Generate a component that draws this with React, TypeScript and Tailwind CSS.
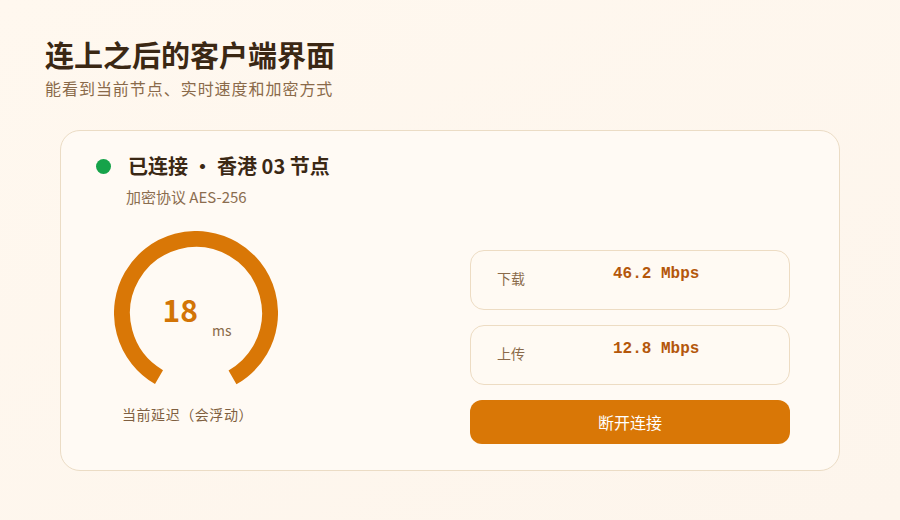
import React from "react";

const font = { fontFamily: '"Noto Sans CJK SC", "Noto Sans", sans-serif' };

// 300° ring with the gap centred at the bottom
function LatencyGauge({ ms }: { ms: number }) {
  const r = 74;
  const c = 2 * Math.PI * r;
  const arc = (c * 300) / 360;
  return (
    <div className="relative w-[164px] h-[164px]">
      <svg width="164" height="164" viewBox="0 0 164 164">
        <circle
          cx="82"
          cy="82"
          r={r}
          fill="none"
          stroke="#d97706"
          strokeWidth="16"
          strokeDasharray={`${arc} ${c}`}
          transform="rotate(120 82 82)"
        />
      </svg>
      <div className="absolute inset-0 flex items-center justify-center">
        <span className="text-[30px] font-bold leading-none text-[#d27406] -mt-[8px] ml-[2px]">
          {ms}
        </span>
        <span className="text-[14px] text-[#8a6a4a] mt-[34px] ml-[14px]">ms</span>
      </div>
    </div>
  );
}

function SpeedRow({ label, value }: { label: string; value: string }) {
  return (
    <div className="h-[60px] rounded-[14px] border border-[#eddcc3] bg-[#fffaf3] flex items-start pl-[26px] pt-[13px]">
      <span className="w-[116px] text-[14px] leading-[20px] mt-[4px] text-[#8a6a4a]">{label}</span>
      <span className="font-mono font-bold text-[16px] leading-[20px] text-[#b4570b]">{value}</span>
    </div>
  );
}

export default function App() {
  return (
    <div
      style={font}
      className="w-[900px] h-[520px] bg-gradient-to-br from-[#fff8ef] to-[#fdf5ec] px-[45px] pt-[35px] overflow-hidden"
    >
      <h1 className="text-[29px] leading-[38px] font-bold text-[#3b2814]">
        连上之后的客户端界面
      </h1>
      <p className="text-[16px] leading-[24px] tracking-[0.06em] text-[#8a6a4a] mt-[3px]">
        能看到当前节点、实时速度和加密方式
      </p>

      <div className="mt-[30px] ml-[15px] w-[780px] h-[341px] rounded-[20px] border border-[#ebdcc5] bg-[#fffaf4] pl-[35px] pr-[49px] pt-[21px]">
        <div className="flex items-center h-[28px]">
          <span className="w-[15px] h-[15px] rounded-full bg-[#16a34a]" />
          <span className="ml-[17px] text-[20px] font-bold text-[#3b2814]">
            已连接 • 香港 03 节点
          </span>
        </div>
        <p className="pl-[30px] mt-[7px] text-[15px] leading-[20px] text-[#8b6d4f]">
          加密协议 AES-256
        </p>

        <div className="flex">
          <div className="ml-[18px] mt-[24px] flex flex-col items-start">
            <LatencyGauge ms={18} />
            <span className="mt-[9px] ml-[8px] text-[14px] leading-[20px] tracking-[0.04em] text-[#7f5f40]">
              当前延迟（会浮动）
            </span>
          </div>

          <div className="ml-auto mt-[43px] w-[320px] flex flex-col gap-[15px]">
            <SpeedRow label="下载" value="46.2 Mbps" />
            <SpeedRow label="上传" value="12.8 Mbps" />
            <button className="h-[44px] rounded-[12px] bg-[#d97706] text-white text-[16px]">
              断开连接
            </button>
          </div>
        </div>
      </div>
    </div>
  );
}
